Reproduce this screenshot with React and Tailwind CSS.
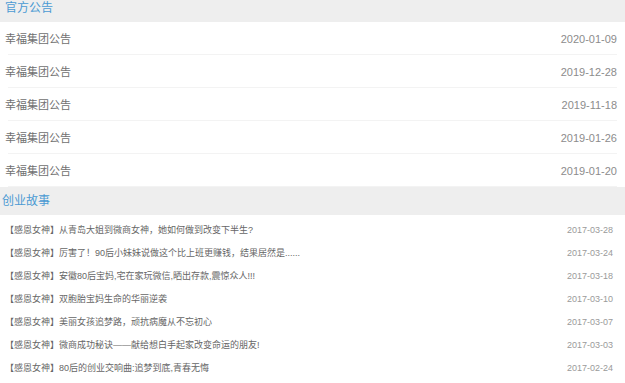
const notices = [
  { title: "幸福集团公告", date: "2020-01-09" },
  { title: "幸福集团公告", date: "2019-12-28" },
  { title: "幸福集团公告", date: "2019-11-18" },
  { title: "幸福集团公告", date: "2019-01-26" },
  { title: "幸福集团公告", date: "2019-01-20" },
];

const stories = [
  { title: "【感恩女神】从青岛大姐到微商女神，她如何做到改变下半生?", date: "2017-03-28" },
  { title: "【感恩女神】厉害了！90后小妹妹说做这个比上班更赚钱，结果居然是......", date: "2017-03-24" },
  { title: "【感恩女神】安徽80后宝妈,宅在家玩微信,晒出存款,震惊众人!!!", date: "2017-03-18" },
  { title: "【感恩女神】双胞胎宝妈生命的华丽逆袭", date: "2017-03-10" },
  { title: "【感恩女神】美丽女孩追梦路，顽抗病魔从不忘初心", date: "2017-03-07" },
  { title: "【感恩女神】微商成功秘诀——献给想白手起家改变命运的朋友!", date: "2017-03-03" },
  { title: "【感恩女神】80后的创业交响曲:追梦到底,青春无悔", date: "2017-02-24" },
];

export default function App() {
  return (
    <div
      className="h-[383px] w-[625px] overflow-hidden bg-white"
      style={{ fontFamily: '"Liberation Sans", "Noto Sans CJK SC", sans-serif' }}
    >
      <div className="flex h-[22px] items-start bg-[#eeeeee] pl-[5px]">
        <span className="text-[12px] leading-[16px] text-[#4b9ad3]">官方公告</span>
      </div>
      <div>
        {notices.map((n, i) => (
          <div key={i} className="mx-[8px] flex h-[33px] items-center justify-between border-b border-[#f3f3f3] pt-[2px]">
            <span className="-ml-[3px] text-[11px] text-[#707070]">{n.title}</span>
            <span className="text-[11px] text-[#8c8c8c]">{n.date}</span>
          </div>
        ))}
      </div>
      <div className="flex h-[28px] items-center bg-[#eeeeee] pl-[2px]">
        <span className="text-[12px] text-[#4b9ad3]">创业故事</span>
      </div>
      <div className="pt-[4px]">
        {stories.map((s, i) => (
          <div key={i} className="flex h-[23px] items-center justify-between pl-[5px] pr-[12px]">
            <span className="text-[9px] text-[#666666]">{s.title}</span>
            <span className="text-[9px] text-[#9a9a9a]">{s.date}</span>
          </div>
        ))}
      </div>
    </div>
  );
}
